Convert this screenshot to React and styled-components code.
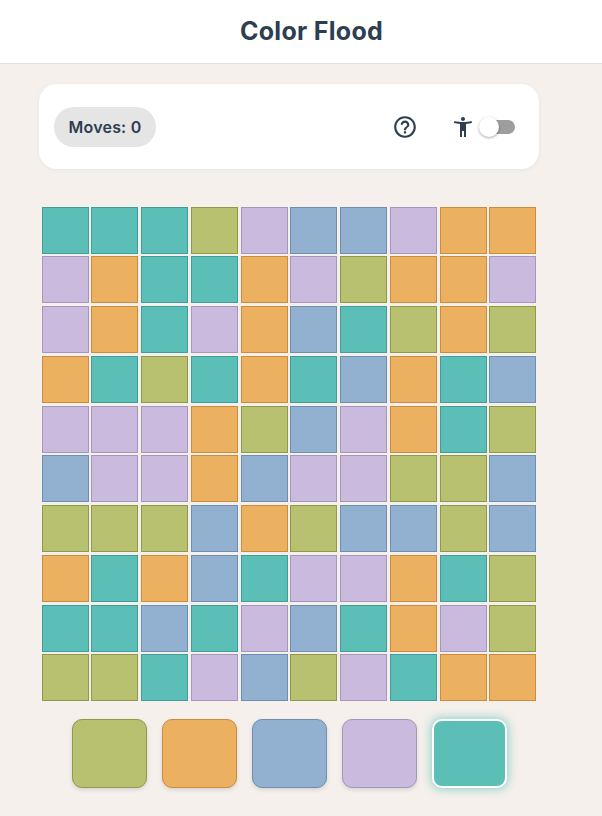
import React from "react";
import styled, { createGlobalStyle } from "styled-components";

const colors = {
  T: { fill: "#5bbfb8", edge: "#3f9f98" },
  G: { fill: "#b8c170", edge: "#8f994a" },
  O: { fill: "#ebb060", edge: "#cc8c3c" },
  B: { fill: "#92b1d0", edge: "#6d8fb0" },
  P: { fill: "#cabadd", edge: "#a596bb" },
};

const board = [
  "TTTGPBBPOO",
  "POTTOPGOOP",
  "POTPOBTGOG",
  "OTGTOTBOTB",
  "PPPOGBPOTG",
  "BPPOBPPGGB",
  "GGGBOGBBGB",
  "OTOBTPPOTG",
  "TTBTPBTOPG",
  "GGTPBGPTOO",
];

const palette = ["G", "O", "B", "P", "T"];

const GlobalStyle = createGlobalStyle`
  html, body {
    margin: 0;
    padding: 0;
    background: #f5f0ec;
    font-family: "Inter", "Noto Sans", sans-serif;
    color: #2c3e50;
  }
`;

const Header = styled.header`
  height: 61px;
  padding: 0 0 2px 21px;
  background: #fff;
  border-bottom: 1px solid #e2e0de;
  display: flex;
  align-items: center;
  justify-content: center;
`;

const Title = styled.h1`
  margin: 0;
  font-size: 25px;
  font-weight: 700;
  letter-spacing: 0.3px;
  color: #2c3e50;
`;

const Main = styled.main`
  width: 500px;
  margin-left: 39px;
  padding: 20px 0 28px;
`;

const Panel = styled.section`
  height: 85px;
  box-sizing: border-box;
  padding: 0 24px 0 15px;
  background: #fff;
  border-radius: 18px;
  box-shadow: 0 1px 4px rgba(0, 0, 0, 0.05);
  display: flex;
  align-items: center;
`;

const MovesPill = styled.div`
  height: 40px;
  width: 102px;
  border-radius: 20px;
  background: #e5e5e5;
  display: flex;
  align-items: center;
  justify-content: center;
  font-size: 16px;
  font-weight: 600;
  letter-spacing: 0.2px;
`;

const HelpButton = styled.span`
  margin-left: auto;
  margin-right: 33px;
  display: flex;
`;

const A11yGroup = styled.div`
  display: flex;
  align-items: center;
`;

const Icon = styled.svg`
  width: ${(p) => p.$size}px;
  height: ${(p) => p.$size}px;
  fill: #2c3e50;
  display: block;
`;

const Track = styled.span`
  position: relative;
  display: block;
  width: 34px;
  height: 14px;
  margin-left: 6px;
  border-radius: 7px;
  background: #9e9e9e;
`;

const Knob = styled.span`
  position: absolute;
  left: -2px;
  top: -3px;
  width: 20px;
  height: 20px;
  border-radius: 50%;
  background: #fff;
  box-shadow: 0 1px 3px rgba(0, 0, 0, 0.35);
`;

const Board = styled.div`
  width: 494.75px;
  margin: 37.6px 0 0 2.6px;
  display: grid;
  grid-template-columns: repeat(10, 1fr);
  gap: 2.75px;
`;

const Cell = styled.div`
  aspect-ratio: 1;
  box-sizing: border-box;
  background: ${(p) => colors[p.$tone].fill};
  border: 1px solid ${(p) => colors[p.$tone].edge};
`;

const Palette = styled.div`
  margin-top: 17.7px;
  display: flex;
  justify-content: center;
  gap: 15px;
`;

const Swatch = styled.button`
  width: 75px;
  height: 69px;
  padding: 0;
  box-sizing: border-box;
  border-radius: 10px;
  background: ${(p) => colors[p.$tone].fill};
  border: ${(p) => (p.$active ? "2px solid #fff" : `1px solid ${colors[p.$tone].edge}`)};
  box-shadow: ${(p) =>
    p.$active
      ? `0 0 10px 1px ${colors[p.$tone].fill}b0`
      : "0 2px 4px rgba(0, 0, 0, 0.12)"};
`;

export default function App() {
  return (
    <>
      <GlobalStyle />
      <Header>
        <Title>Color Flood</Title>
      </Header>
      <Main>
        <Panel>
          <MovesPill>Moves: 0</MovesPill>
          <HelpButton>
            <Icon $size={26} viewBox="0 0 24 24">
              <path d="M11 18h2v-2h-2v2zm1-16C6.48 2 2 6.48 2 12s4.48 10 10 10 10-4.48 10-10S17.52 2 12 2zm0 18c-4.41 0-8-3.59-8-8s3.59-8 8-8 8 3.59 8 8-3.59 8-8 8zm0-14c-2.21 0-4 1.79-4 4h2c0-1.1.9-2 2-2s2 .9 2 2c0 2-3 1.75-3 5h2c0-2.25 3-2.5 3-5 0-2.21-1.79-4-4-4z" />
            </Icon>
          </HelpButton>
          <A11yGroup>
            <Icon $size={24} viewBox="0 0 24 24">
              <path d="M20.5 6c-2.61.7-5.67 1-8.5 1s-5.89-.3-8.5-1L3 8c1.86.5 4 .83 6 1v13h2v-6h2v6h2V9c2-.17 4.14-.5 6-1l-.5-2zM12 6c1.1 0 2-.9 2-2s-.9-2-2-2-2 .9-2 2 .9 2 2 2z" />
            </Icon>
            <Track>
              <Knob />
            </Track>
          </A11yGroup>
        </Panel>
        <Board>
          {board.map((row, r) =>
            row.split("").map((tone, c) => <Cell key={`${r}-${c}`} $tone={tone} />)
          )}
        </Board>
        <Palette>
          {palette.map((tone) => (
            <Swatch key={tone} $tone={tone} $active={tone === "T"} />
          ))}
        </Palette>
      </Main>
    </>
  );
}
